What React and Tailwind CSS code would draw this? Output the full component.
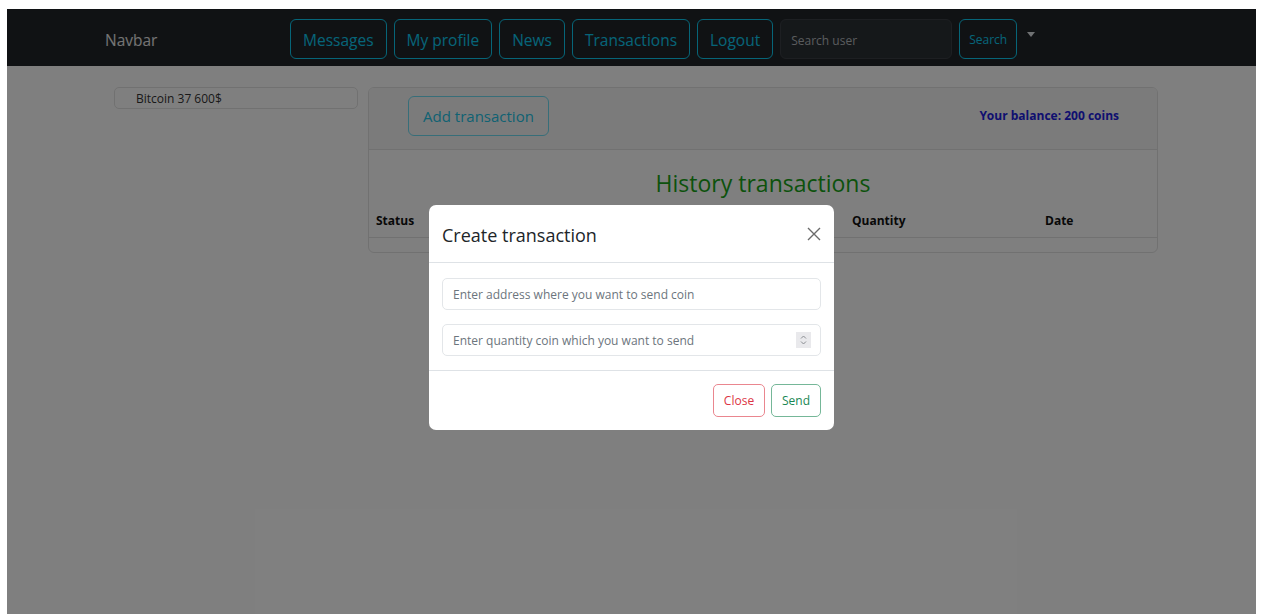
import React from 'react';

const font = { fontFamily: '"Open Sans", "Noto Sans", sans-serif' };

const NavButton = ({ label }) => (
  <button className="h-[40px] px-[12px] pt-[3px] rounded-[6px] border border-[#0dcaf0] text-[15.5px] text-[#0dcaf0] leading-none">
    {label}
  </button>
);

const Navbar = () => (
  <nav className="h-[57px] bg-[#212529] flex items-start pt-[10px]">
    <span className="ml-[98px] w-[185px] mt-[14px] text-[15.5px] text-white/90 leading-none">Navbar</span>
    <div className="flex items-start gap-[7px]">
      <NavButton label="Messages" />
      <NavButton label="My profile" />
      <NavButton label="News" />
      <NavButton label="Transactions" />
      <NavButton label="Logout" />
      <input
        className="h-[40px] w-[172px] px-[10px] pt-[2px] rounded-[6px] border border-[#3a3f45] bg-[#2b3035] text-[12px] text-white placeholder:text-[#b5b9bd] outline-none"
        placeholder="Search user"
      />
      <button className="h-[40px] w-[58px] pt-[2px] rounded-[6px] border border-[#0dcaf0] text-[12px] text-[#0dcaf0]">
        Search
      </button>
      {/* dropdown caret */}
      <span className="ml-[3px] mt-[13px] w-0 h-0 border-l-[4px] border-r-[4px] border-t-[5px] border-l-transparent border-r-transparent border-t-[#dfe2e6]" />
    </div>
  </nav>
);

const TransactionsCard = () => (
  <div className="w-[790px] h-[166px] rounded-[6px] border border-[#e3e3e3] flex flex-col overflow-hidden">
    <div className="h-[62px] shrink-0 flex items-center justify-between pl-[39px] pr-[38px] pb-[6px] bg-[#f7f7f7] border-b border-[#e3e3e3]">
      <button className="h-[40px] w-[141px] pt-[1px] rounded-[6px] border border-[#6fdcf2] text-[15px] text-[#22c4e6]">
        Add transaction
      </button>
      <span className="text-[12px] font-bold text-[#2020e0]">Your balance: 200 coins</span>
    </div>
    <div className="flex-1 flex flex-col">
      <h2 className="pt-[16px] h-[55px] text-center text-[23px] text-[#18a418] leading-[34px]">History transactions</h2>
      <div className="grid grid-cols-[476px_193px_1fr] h-[33px] items-center border-b border-[#e3e3e3] text-[12px] font-bold text-[#111]">
        <span className="pl-[7px]">Status</span>
        <span className="pl-[7px]">Quantity</span>
        <span className="pl-[7px]">Date</span>
      </div>
    </div>
  </div>
);

const Modal = () => (
  <div className="absolute inset-0 bg-black/50 flex justify-center pt-[196px]">
    <div className="w-[405px] h-[225px] bg-white rounded-[7px] flex flex-col">
      <div className="h-[58px] shrink-0 flex items-center justify-between pl-[13px] pr-[12px] pt-[3px] border-b border-[#dee2e6]">
        <h5 className="text-[18px] text-[#212529]">Create transaction</h5>
        <svg width="16" height="16" viewBox="0 0 16 16" className="text-[#6b6b6b] mb-[2px]">
          <path d="M2 2 L14 14 M14 2 L2 14" stroke="currentColor" strokeWidth="1.4" fill="none" />
        </svg>
      </div>
      <div className="flex-1 flex flex-col gap-[14px] px-[13px] pt-[15px]">
        <input
          className="h-[32px] px-[10px] pt-[1px] rounded-[5px] border border-[#e3e6e9] text-[12px] placeholder:text-[#6c757d] outline-none"
          placeholder="Enter address where you want to send coin"
        />
        <div className="relative">
          <input
            className="w-full h-[32px] px-[10px] pt-[1px] rounded-[5px] border border-[#e3e6e9] text-[12px] placeholder:text-[#6c757d] outline-none"
            placeholder="Enter quantity coin which you want to send"
          />
          {/* number spinner */}
          <div className="absolute right-[10px] top-[8px] w-[15px] h-[16px] bg-[#e9e9ec] flex flex-col items-center justify-center">
            <svg width="9" height="12" viewBox="0 0 9 12">
              <path d="M2 4.5 L4.5 2 L7 4.5 M2 7.5 L4.5 10 L7 7.5" stroke="#8a8d92" strokeWidth="1" fill="none" />
            </svg>
          </div>
        </div>
      </div>
      <div className="h-[60px] shrink-0 flex items-center justify-end gap-[6px] pr-[13px] border-t border-[#dee2e6]">
        <button className="h-[33px] w-[52px] pt-[1px] rounded-[5px] border border-[#ea868f] text-[12px] text-[#dc3545]">
          Close
        </button>
        <button className="h-[33px] w-[50px] pt-[1px] rounded-[5px] border border-[#75b798] text-[12px] text-[#198754]">
          Send
        </button>
      </div>
    </div>
  </div>
);

export default function App() {
  return (
    <div className="min-h-screen bg-white pl-[7px] pt-[9px] pr-[5px]" style={font}>
      <div className="relative h-[605px] bg-white overflow-hidden">
        <Navbar />
        <div className="flex items-start gap-[10px] pl-[107px] pt-[21px]">
          <div className="w-[244px] h-[22px] rounded-[5px] border border-[#e3e3e3] pl-[21px] text-[12px] leading-[21px] text-[#333]">
            Bitcoin 37 600$
          </div>
          <TransactionsCard />
        </div>
        <Modal />
      </div>
    </div>
  );
}
